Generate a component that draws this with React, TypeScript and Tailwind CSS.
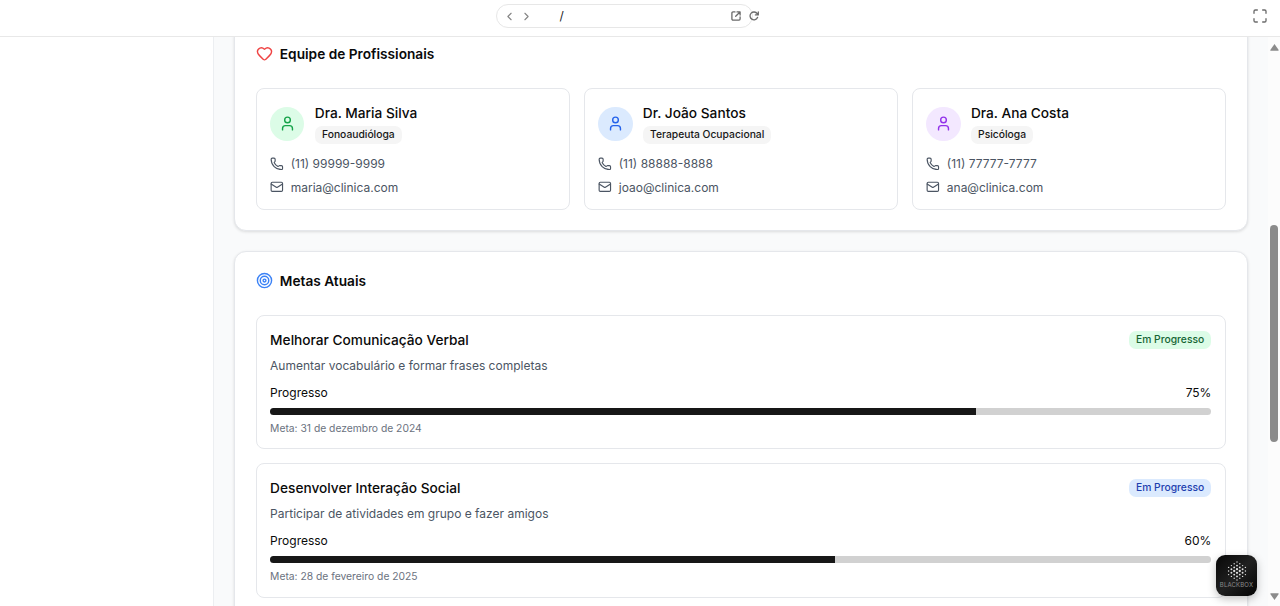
import React from "react";
import {
  ChevronLeft,
  ChevronRight,
  Heart,
  Mail,
  Maximize,
  Phone,
  Target,
  User,
} from "lucide-react";

const team = [
  { name: "Dra. Maria Silva", role: "Fonoaudióloga", phone: "(11) 99999-9999", email: "maria@clinica.com", tone: "bg-[#dcfce7] text-[#16a34a]" },
  { name: "Dr. João Santos", role: "Terapeuta Ocupacional", phone: "(11) 88888-8888", email: "joao@clinica.com", tone: "bg-[#dbeafe] text-[#2563eb]" },
  { name: "Dra. Ana Costa", role: "Psicóloga", phone: "(11) 77777-7777", email: "ana@clinica.com", tone: "bg-[#f3e8ff] text-[#9333ea]" },
];

const goals = [
  { title: "Melhorar Comunicação Verbal", text: "Aumentar vocabulário e formar frases completas", value: 75, due: "Meta: 31 de dezembro de 2024", tone: "bg-[#dcfce7] text-[#166534]" },
  { title: "Desenvolver Interação Social", text: "Participar de atividades em grupo e fazer amigos", value: 60, due: "Meta: 28 de fevereiro de 2025", tone: "bg-[#dbeafe] text-[#1e40af]" },
];

function Toolbar() {
  return (
    <header className="flex h-[37px] shrink-0 items-center border-b border-[#e8e8e8] bg-white pb-1 text-[#6b6b6b]">
      <div className="ml-[496px] flex h-6 w-[257px] shrink-0 items-center rounded-full border border-[#e7e7e7] pl-[5.500px]">
        <ChevronLeft className="size-[13px] shrink-0 text-[#858585]" strokeWidth={2} />
        <ChevronRight className="ml-[4px] size-[13px] shrink-0 text-[#858585]" strokeWidth={2} />
        <span className="ml-[27px] w-[171.500px] shrink-0 text-[12px] text-[#222]">/</span>
        <svg className="size-[10px] shrink-0" viewBox="0 0 10 10" fill="none" stroke="currentColor" strokeWidth="1.3" strokeLinecap="round" strokeLinejoin="round">
          <path d="M4 .9H2A1.1 1.1 0 0 0 .9 2v6A1.1 1.1 0 0 0 2 9.100h6A1.100 1.100 0 0 0 9.100 8V6M6 .9h3.100V4M9 1 4.700 5.300" />
        </svg>
        <svg className="ml-[7.500px] size-[10px] shrink-0" viewBox="0 0 10 10" fill="none" stroke="currentColor" strokeWidth="1.3" strokeLinecap="round" strokeLinejoin="round">
          <path d="M8.600 6.300A3.900 3.900 0 1 1 8.200 2.700L9.200 3.800M9.300 1v2.900H6.400" />
        </svg>
      </div>
      <Maximize className="mr-[12px] ml-auto size-4" strokeWidth={2} />
    </header>
  );
}

function Mark() {
  const columns = [3, 4, 5, 6, 5, 4, 3];
  return (
    <div className="absolute top-[555px] left-[1216px] flex h-[41px] w-[41px] flex-col items-center rounded-[9px] bg-linear-to-br from-[#080808] via-[#202020] to-[#050505] pt-[5px] shadow-[0_3px_9px_rgba(0,0,0,0.25)]">
      <svg className="h-[22px] w-[20px] shrink-0" viewBox="0 0 20 22" fill="#dedede">
        {columns.map((count, c) =>
          Array.from({ length: count }, (_, r) => {
            const x = 10 + (c - 3) * 2.8;
            const y = 11 + (r - (count - 1) / 2) * 3.6;
            const d = Math.hypot(x - 10, y - 11);
            return <circle key={`${c}-${r}`} cx={x} cy={y} r={d < 4 ? 1.15 : d < 7 ? 0.95 : 0.7} />;
          }),
        )}
      </svg>
      <span className="text-[6px] leading-[6px] tracking-[0.15px] text-[#8a8a8a]">BLACKBOX</span>
    </div>
  );
}

function Scrollbar() {
  return (
    <div className="flex w-[12px] shrink-0 flex-col items-center bg-[#fcfcfc] pt-[7px] pb-[6px]">
      <svg className="h-[7px] w-[9px] shrink-0" viewBox="0 0 9 7" fill="#8b8b8b"><path d="M4.500 0 8.700 6q.2.800-.7.800H1q-.9 0-.7-.8z" /></svg>
      <div className="mt-[174px] h-[217px] w-[7.500px] shrink-0 rounded-full bg-[#8b8b8b]" />
      <svg className="mt-auto h-[7px] w-[9px] shrink-0" viewBox="0 0 9 7" fill="#8b8b8b"><path d="M4.500 7 8.700 1q.2-.8-.7-.8H1q-.9 0-.7.8z" /></svg>
    </div>
  );
}

const panel = "rounded-[12px] border border-[#e5e7eb] bg-white px-[20.5px] pb-[20.5px] shadow-[0_1px_3px_rgba(0,0,0,0.12)]";

export default function App() {
  return (
    <div className="relative flex h-[606px] w-[1280px] flex-col overflow-hidden bg-white font-['Inter','Liberation_Sans',sans-serif] text-[#0a0a0a]">
      <Toolbar />
      <div className="flex min-h-0 flex-1">
        <aside className="w-[213.500px] shrink-0 border-r border-[#eceef1] bg-white" />
        <main className="flex min-w-0 flex-1 flex-col gap-[20px] overflow-hidden bg-[#f9fafb] pr-[20.500px] pl-[20.500px]">
          <section className={`${panel} -mt-[12.600px] h-[207px] shrink-0 pt-[20px]`}>
            <h2 className="flex h-[17px] items-center gap-[7.300px] text-[13.7px] font-semibold">
              <Heart className="size-[17px] text-[#ef4444]" />
              Equipe de Profissionais
            </h2>
            <div className="mt-[25.100px] grid grid-cols-3 gap-[13.700px]">
              {team.map((p) => (
                <article key={p.name} className="h-[122px] rounded-[8px] border border-[#e5e7eb] px-[13.700px] pt-[14.500px]">
                  <div className="flex items-center gap-[10.300px]">
                    <div className={`mt-px flex size-[34.300px] items-center justify-center rounded-full ${p.tone}`}>
                      <User className="size-[17px]" />
                    </div>
                    <div>
                      <h3 className="text-[13.700px] leading-[20.500px] font-medium">{p.name}</h3>
                      <span className="mt-[2px] flex h-[18.500px] w-fit items-center rounded-[7px] bg-[#f5f5f5] px-[7.200px] text-[10.300px] font-medium text-[#171717]">{p.role}</span>
                    </div>
                  </div>
                  <div className="mt-[11px] flex flex-col gap-[6.800px] text-[12px] leading-[17px] text-[#4b5563]">
                    <p className="flex items-center gap-[6.800px]"><Phone className="size-[13.700px]" />{p.phone}</p>
                    <p className="flex items-center gap-[6.800px]"><Mail className="size-[13.700px]" />{p.email}</p>
                  </div>
                </article>
              ))}
            </div>
          </section>
          <section className={`${panel} h-[400px] shrink-0 pt-[20px]`}>
            <h2 className="flex h-[17px] items-center gap-[7.300px] text-[13.700px] font-semibold">
              <Target className="size-[17px] text-[#3b82f6]" />
              Metas Atuais
            </h2>
            <div className="mt-[25.500px] flex flex-col gap-[13.700px]">
              {goals.map((g) => (
                <article key={g.title} className="h-[134.500px] rounded-[8px] border border-[#e5e7eb] px-[13.600px] pt-[13.700px]">
                  <div className="flex h-[20.500px] items-center justify-between">
                    <h3 className="text-[13.700px] font-medium">{g.title}</h3>
                    <span className={`flex h-[18.500px] items-center rounded-[7px] px-[7.200px] text-[10.300px] font-medium ${g.tone}`}>Em Progresso</span>
                  </div>
                  <p className="mt-[7px] text-[12px] leading-[17px] text-[#4b5563]">{g.text}</p>
                  <div className="mt-[10px] flex justify-between text-[12px] leading-[17px]">
                    <span>Progresso</span>
                    <span>{g.value}%</span>
                  </div>
                  <div className="mt-[7px] h-[7px] overflow-hidden rounded-full bg-[#d1d1d1]">
                    <div className="h-full bg-[#171717]" style={{ width: `${g.value}%` }} />
                  </div>
                  <p className="mt-[5.700px] text-[10.300px] leading-[14px] text-[#6b7280]">{g.due}</p>
                </article>
              ))}
            </div>
          </section>
        </main>
        <Scrollbar />
      </div>
      <Mark />
    </div>
  );
}
